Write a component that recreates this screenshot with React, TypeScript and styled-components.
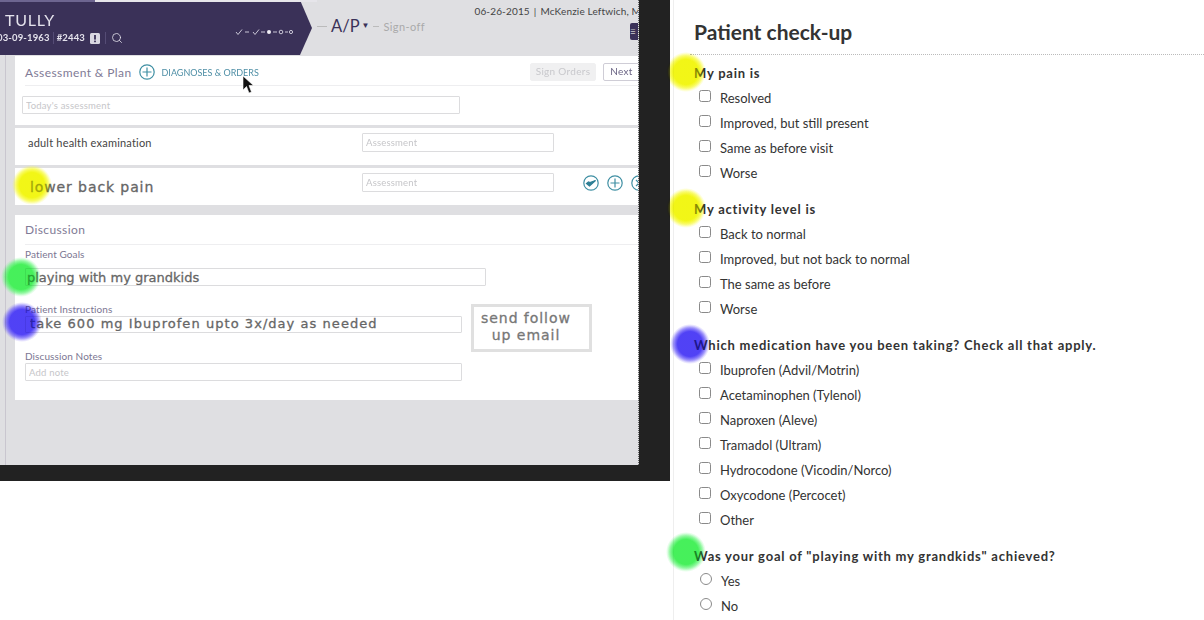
import React from "react";
import styled, { createGlobalStyle } from "styled-components";
import { Search } from "lucide-react";

const Global = createGlobalStyle`
  html, body { margin: 0; padding: 0; background: #fff; height: 100%; overflow: hidden; }
  #root { height: 100%; }
`;

const Page = styled.div`
  display: flex;
  width: 1204px;
  height: 620px;
  overflow: hidden;
  background: #fff;
  font-family: Lato, "Liberation Sans", sans-serif;
`;

/* left: the video frame */
const VideoFrame = styled.div`
  flex: none;
  width: 670px;
  height: 481px;
  background: #222;
`;
const Screen = styled.div`
  position: relative;
  width: 638px;
  height: 465px;
  background: #dfdfe2;
  overflow: hidden;
  border-right: 1px dotted #666;
  &::before {
    content: "";
    position: absolute;
    z-index: 1;
    left: 0;
    top: 0;
    width: 317px;
    height: 2px;
    background: linear-gradient(to right, #6d6590 0 95px, #e6e5ea 95px 100%);
  }
`;
const Banner = styled.div`
  display: flex;
  height: 55px;
`;
const PatientBar = styled.div`
  flex: none;
  width: 312px;
  height: 55px;
  background: #3a3158;
  clip-path: polygon(0 0, 300px 0, 312px 28px, 300px 55px, 0 55px);
  color: #e4e2ec;
  display: flex;
  align-items: flex-end;
  justify-content: space-between;
  padding: 0 19px 10px 0;
  box-sizing: border-box;
  filter: blur(0.3px);
`;
const PatientInfo = styled.div`
  display: flex;
  flex-direction: column;
  gap: 1px;
`;
const PatientName = styled.div`
  font-size: 16px;
  letter-spacing: 0.8px;
  line-height: 20px;
  padding-left: 5px;
`;
const PatientMeta = styled.div`
  display: flex;
  align-items: center;
  gap: 3px;
  margin-left: -3px;
  font-size: 9.5px;
  font-weight: 700;
  line-height: 14px;
  letter-spacing: 0.15px;
  svg {
    flex: none;
  }
`;
const MetaSep = styled.span`
  width: 1px;
  height: 12px;
  background: #554c75;
`;
const AlertIcon = styled.svg`
  margin: 0 2px 0 2px;
`;
const SearchSlot = styled.span`
  display: flex;
  margin-left: 2px;
`;
const CrumbArea = styled.div`
  flex: 1;
  display: flex;
  align-items: flex-start;
  justify-content: space-between;
  min-width: 0;
  color: #3a3158;
`;
const Crumbs = styled.div`
  display: flex;
  align-items: center;
  gap: 3px;
  padding: 15px 0 0 5px;
`;
const Dash = styled.span<{ $w: number }>`
  width: ${(p) => p.$w}px;
  height: 1px;
  background: #bbb;
  margin-right: 1px;
`;
const CrumbCurrent = styled.span`
  font-size: 16.5px;
  line-height: 22px;
`;
const CrumbCaret = styled.span`
  font-size: 8px;
  margin: 0 1px 3px -1px;
`;
const CrumbNext = styled.span`
  font-size: 11px;
  letter-spacing: 0.4px;
  color: #aaa;
`;
const TopRight = styled.div`
  display: flex;
  flex-direction: column;
  align-items: flex-end;
  gap: 5px;
  padding-top: 4px;
  white-space: nowrap;
`;
const Visit = styled.div`
  display: flex;
  gap: 4px;
  font-size: 10px;
  line-height: 14px;
  letter-spacing: 0.15px;
  color: #444;
  margin-right: -3px;
`;
const MenuTab = styled.div`
  width: 8px;
  height: 17px;
  background: #3a3158;
  border-radius: 2px 0 0 2px;
  color: #ccc;
  font-size: 10px;
  line-height: 16px;
`;

const Body = styled.div`
  display: flex;
  flex-direction: column;
  height: 410px;
  border-left: 1px solid #c9c6cf;
  margin-left: 5px;
  padding-left: 9px;
  filter: blur(0.25px);
`;
const Card = styled.div<{ $mt?: number; $h: number }>`
  position: relative;
  background: #fff;
  margin-top: ${(p) => p.$mt ?? 0}px;
  height: ${(p) => p.$h}px;
  flex: none;
`;
const CardHead = styled.div<{ $h: number }>`
  display: flex;
  align-items: center;
  margin: 0 -2px 0 10px;
  height: ${(p) => p.$h}px;
  border-bottom: 1px solid #eeeef0;
`;
const CardTitle = styled.div<{ $mt: number }>`
  font-size: 12px;
  letter-spacing: 0.4px;
  color: #7f7b96;
  margin-top: ${(p) => p.$mt}px;
`;
const AddLink = styled.div`
  display: flex;
  align-items: center;
  gap: 7px;
  margin: 3px 0 0 7px;
  font-size: 9px;
  color: #4f8fa6;
`;
const HeadButtons = styled.div`
  display: flex;
  gap: 7px;
  margin: 2px 0 0 auto;
`;
const GhostBtn = styled.div<{ $active?: boolean }>`
  height: 18px;
  line-height: 14px;
  box-sizing: border-box;
  font-size: 10px;
  letter-spacing: 0.3px;
  text-align: center;
  border-radius: 2px;
  width: ${(p) => (p.$active ? 37 : 66)}px;
  background: ${(p) => (p.$active ? "#fff" : "#f0f0f1")};
  color: ${(p) => (p.$active ? "#6a6484" : "#c8c8cc")};
  border: 1px solid ${(p) => (p.$active ? "#cfcdd6" : "#f0f0f1")};
`;
const Field = styled.input<{ $w: number; $h?: number; $big?: boolean; $wide?: boolean }>`
  display: block;
  box-sizing: border-box;
  flex: none;
  width: ${(p) => p.$w}px;
  height: ${(p) => p.$h ?? 18}px;
  padding: ${(p) => (p.$wide ? "0 3px 3px 4px" : p.$big ? "0 1px" : "0 3px")};
  margin: 0;
  background: #fff;
  border: 1px solid #dcdcde;
  border-radius: 1px;
  outline: none;
  font-family: ${(p) => (p.$big ? '"DejaVu Sans", sans-serif' : "Lato, sans-serif")};
  font-size: ${(p) => (p.$big ? "13px" : "9.5px")};
  letter-spacing: ${(p) => (p.$wide ? "1.05px" : "0")};
  color: #666;
  -webkit-text-stroke: ${(p) => (p.$big ? "0.3px" : "0")};
  &::placeholder {
    color: #c6c6c9;
    letter-spacing: 0.2px;
  }
`;
const TodayRow = styled.div`
  padding: 10px 0 0 7px;
`;
const DiagnosisRow = styled.div`
  display: flex;
  align-items: flex-start;
  height: 37px;
  padding: 5px 0 0 13px;
  box-sizing: border-box;
`;
const DiagnosisName = styled.div<{ $big?: boolean }>`
  width: 334px;
  flex: none;
  color: ${(p) => (p.$big ? "#666" : "#444")};
  font-family: ${(p) => (p.$big ? '"DejaVu Sans", sans-serif' : "Lato, sans-serif")};
  font-size: ${(p) => (p.$big ? "14px" : "11px")};
  line-height: ${(p) => (p.$big ? 28 : 20)}px;
  letter-spacing: ${(p) => (p.$big ? "0.9px" : "0.2px")};
  -webkit-text-stroke: ${(p) => (p.$big ? "0.3px" : "0")};
  ${(p) => (p.$big ? "padding-left: 2px; margin-right: -2px;" : "")}
`;
const RowIcons = styled.div`
  display: flex;
  gap: 8px;
  margin: 2px 0 0 29px;
  flex: none;
`;
const FieldLabel = styled.div<{ $mt: number }>`
  margin: ${(p) => p.$mt}px 0 0 10px;
  font-size: 10px;
  line-height: 12px;
  letter-spacing: 0.1px;
  color: #7b7692;
`;
const FieldRow = styled.div<{ $mt: number }>`
  display: flex;
  margin: ${(p) => p.$mt}px 0 0 10px;
`;
const FollowUp = styled.div`
  position: absolute;
  left: 456px;
  top: 89px;
  width: 121px;
  height: 48px;
  box-sizing: border-box;
  border: 3px solid #e0e0e0;
  background: #fff;
  font-family: "DejaVu Sans", sans-serif;
  font-size: 14px;
  line-height: 17px;
  letter-spacing: 0.95px;
  color: #777;
  -webkit-text-stroke: 0.3px;
  padding: 3px 0 0 7px;
  white-space: pre;
`;
const Pointer = styled.svg`
  position: absolute;
  left: 242px;
  top: 75px;
`;

/* right: the form */
const FormPanel = styled.div`
  flex: none;
  width: 530px;
  margin-left: 3px;
  border-left: 1px solid #eee;
  color: #333;
`;
const FormTitle = styled.h1`
  margin: 0 0 0 16px;
  height: 55px;
  padding: 18px 0 0 4px;
  box-sizing: border-box;
  font-size: 21px;
  line-height: 28px;
  font-weight: 700;
  color: #333;
  border-bottom: 1px dotted #bbb;
`;
const FormBody = styled.div`
  padding: 5px 0 0 20px;
  display: flex;
  flex-direction: column;
  gap: 11px;
`;
const Question = styled.div`
  position: relative;
  height: 25px;
  line-height: 26px;
  font-size: 13px;
  font-weight: 700;
  letter-spacing: 0.77px;
  color: #333;
`;
const Option = styled.label`
  display: flex;
  align-items: center;
  height: 25px;
  font-size: 13px;
  color: #333;
`;
const Box = styled.input`
  margin: 0 9px 3px 5px;
  width: 12px;
  height: 12px;
  flex: none;
  opacity: 0.85;
  &[type="radio"] {
    margin-left: 6px;
  }
`;

type Tint = { wash: string; mult: string };

/* a marker: the soft colour multiplies over the page, the thin wash dulls the text under it */
const Glow = styled.div<{ $t: Tint; $x: number; $y: number }>`
  position: absolute;
  left: ${(p) => p.$x}px;
  top: ${(p) => p.$y}px;
  width: 40px;
  height: 40px;
  pointer-events: none;
  &::before,
  &::after {
    content: "";
    position: absolute;
    inset: 0;
    border-radius: 50%;
  }
  &::before {
    background: radial-gradient(circle closest-side, ${(p) => p.$t.wash}77 0 62%, ${(p) => p.$t.wash}00 92%);
  }
  &::after {
    mix-blend-mode: multiply;
    background: radial-gradient(circle closest-side, ${(p) => p.$t.mult} 0 62%, ${(p) => p.$t.mult}99 80%, ${(p) => p.$t.mult}00 100%);
  }
`;

const YELLOW: Tint = { wash: "#eef20a", mult: "#fafc28" };
const GREEN: Tint = { wash: "#3ff05a", mult: "#6cf782" };
const BLUE: Tint = { wash: "#4a3cf5", mult: "#7866fa" };

function CirclePlus({ size = 16, x = false, check = false }: { size?: number; x?: boolean; check?: boolean }) {
  return (
    <svg width={size} height={size} viewBox="0 0 16 16" fill="none" stroke="#3f8fa3" strokeWidth="1.2">
      <circle cx="8" cy="8" r="7.2" />
      {check ? (
        <path d="M3.5 8.5 L6.5 11 L12.5 5.5 L7 7.5 L5.5 7 Z" fill="#2f7f95" stroke="#2f7f95" />
      ) : x ? (
        <path d="M5 5 L11 11 M11 5 L5 11" />
      ) : (
        <path d="M8 3.5 V12.5 M3.5 8 H12.5" />
      )}
    </svg>
  );
}

function Stepper() {
  return (
    <svg width="58" height="10" viewBox="0 0 58 10" fill="none" stroke="#c9c6d6" strokeWidth="1" style={{ marginBottom: 8 }}>
      <path d="M1 5 L3 7.5 L7 2.5 M10 5 H14 M18 5 L20 7.5 L24 2.5 M26 5 H30 M38 5 H42 M50 5 H53" />
      <circle cx="34" cy="5" r="2" fill="#f0eff5" stroke="none" />
      <circle cx="46" cy="5" r="1.8" />
      <circle cx="56" cy="5" r="1.6" />
    </svg>
  );
}

function AlertBox() {
  return (
    <AlertIcon width="10" height="11" viewBox="0 0 10 11">
      <rect width="10" height="11" rx="1.5" fill="#d9d7e2" />
      <rect x="4.1" y="2" width="1.8" height="4.6" fill="#3a3158" />
      <rect x="4.1" y="7.6" width="1.8" height="1.6" fill="#3a3158" />
    </AlertIcon>
  );
}

type Group = { q: string; type: "checkbox" | "radio"; options: string[]; glow: [Tint, number, number] };

const groups: Group[] = [
  { q: "My pain is", type: "checkbox", glow: [YELLOW, -28, -8], options: ["Resolved", "Improved, but still present", "Same as before visit", "Worse"] },
  { q: "My activity level is", type: "checkbox", glow: [YELLOW, -28, -8], options: ["Back to normal", "Improved, but not back to normal", "The same as before", "Worse"] },
  {
    q: "Which medication have you been taking? Check all that apply.",
    type: "checkbox",
    glow: [BLUE, -24, -8],
    options: ["Ibuprofen (Advil/Motrin)", "Acetaminophen (Tylenol)", "Naproxen (Aleve)", "Tramadol (Ultram)", "Hydrocodone (Vicodin/Norco)", "Oxycodone (Percocet)", "Other"],
  },
  { q: 'Was your goal of "playing with my grandkids" achieved?', type: "radio", glow: [GREEN, -28, -11], options: ["Yes", "No"] },
];

export default function App() {
  return (
    <Page>
      <Global />
      <VideoFrame>
        <Screen>
          <Banner>
            <PatientBar>
              <PatientInfo>
                <PatientName>TULLY</PatientName>
                <PatientMeta>
                  <span>03-09-1963</span>
                  <MetaSep />
                  <span>#2443</span>
                  <AlertBox />
                  <MetaSep />
                  <SearchSlot>
                    <Search size={12} strokeWidth={1.6} />
                  </SearchSlot>
                </PatientMeta>
              </PatientInfo>
              <Stepper />
            </PatientBar>
            <CrumbArea>
              <Crumbs>
                <Dash $w={10} />
                <CrumbCurrent>A/P</CrumbCurrent>
                <CrumbCaret>▼</CrumbCaret>
                <Dash $w={6} />
                <CrumbNext>Sign-off</CrumbNext>
              </Crumbs>
              <TopRight>
                <Visit>
                  <span>06-26-2015</span>
                  <span>|</span>
                  <span>McKenzie Leftwich, M</span>
                </Visit>
                <MenuTab>≡</MenuTab>
              </TopRight>
            </CrumbArea>
          </Banner>
          <Body>
            <Card $mt={1} $h={69}>
              <CardHead $h={29}>
                <CardTitle $mt={4}>Assessment &amp; Plan</CardTitle>
                <AddLink>
                  <CirclePlus />
                  DIAGNOSES &amp; ORDERS
                </AddLink>
                <HeadButtons>
                  <GhostBtn>Sign Orders</GhostBtn>
                  <GhostBtn $active>Next</GhostBtn>
                </HeadButtons>
              </CardHead>
              <TodayRow>
                <Field $w={438} placeholder="Today's assessment" readOnly />
              </TodayRow>
            </Card>
            <Card $mt={3} $h={37}>
              <DiagnosisRow>
                <DiagnosisName>adult health examination</DiagnosisName>
                <Field $w={192} $h={19} placeholder="Assessment" readOnly />
              </DiagnosisRow>
            </Card>
            <Card $mt={3} $h={37}>
              <DiagnosisRow>
                <DiagnosisName $big>lower back pain</DiagnosisName>
                <Field $w={192} $h={19} placeholder="Assessment" readOnly />
                <RowIcons>
                  <CirclePlus check />
                  <CirclePlus />
                  <CirclePlus x />
                </RowIcons>
              </DiagnosisRow>
              <Glow $t={YELLOW} $x={-3} $y={-3} />
            </Card>
            <Card $mt={10} $h={185}>
              <CardHead $h={29}>
                <CardTitle $mt={0}>Discussion</CardTitle>
              </CardHead>
              <FieldLabel $mt={3}>Patient Goals</FieldLabel>
              <FieldRow $mt={8}>
                <Field $w={461} $big defaultValue="playing with my grandkids" readOnly />
              </FieldRow>
              <FieldLabel $mt={17}>Patient Instructions</FieldLabel>
              <FieldRow $mt={1}>
                <Field $w={437} $h={17} $big $wide defaultValue="take 600 mg Ibuprofen upto 3x/day as needed" readOnly />
              </FieldRow>
              <FieldLabel $mt={17}>Discussion Notes</FieldLabel>
              <FieldRow $mt={1}>
                <Field $w={437} placeholder="Add note" readOnly />
              </FieldRow>
              <FollowUp>{"send follow\n  up email"}</FollowUp>
              <Glow $t={GREEN} $x={-14} $y={42} />
              <Glow $t={BLUE} $x={-13} $y={87} />
            </Card>
          </Body>
          <Pointer width="12" height="20" viewBox="0 0 12 20">
            <path d="M1 1 L1 15 L4.5 11.5 L7 18 L9.5 17 L7 10.5 L11.5 10.5 Z" fill="#111" stroke="#fff" strokeWidth="0.6" />
          </Pointer>
        </Screen>
      </VideoFrame>
      <FormPanel>
        <FormTitle>Patient check-up</FormTitle>
        <FormBody>
          {groups.map((g) => (
            <div key={g.q}>
              <Question>
                {g.q}
                <Glow $t={g.glow[0]} $x={g.glow[1]} $y={g.glow[2]} />
              </Question>
              {g.options.map((o) => (
                <Option key={o}>
                  <Box type={g.type} name={g.type === "radio" ? "goal" : undefined} />
                  {o}
                </Option>
              ))}
            </div>
          ))}
        </FormBody>
      </FormPanel>
    </Page>
  );
}
